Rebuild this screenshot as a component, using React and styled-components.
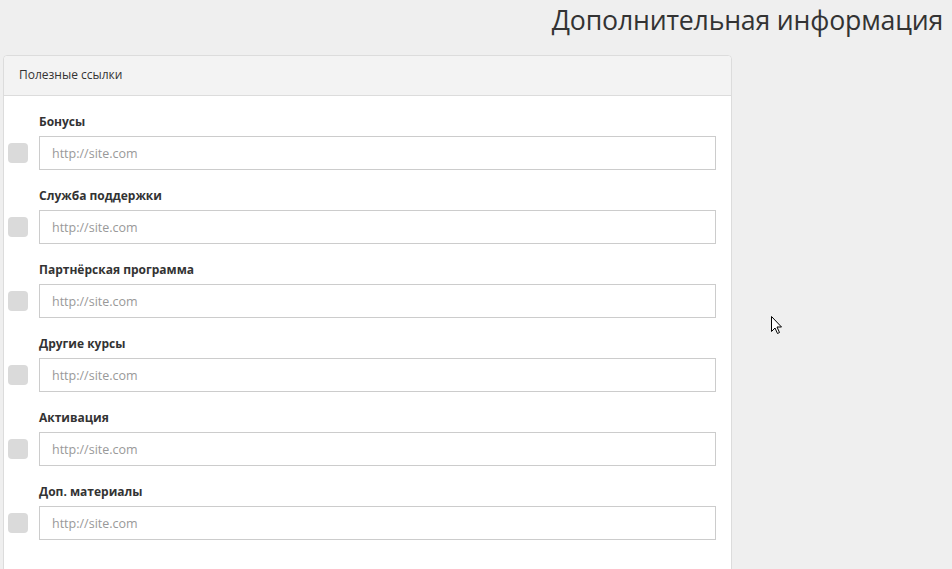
import React from "react";
import styled, { createGlobalStyle } from "styled-components";

const Global = createGlobalStyle`
  html, body { margin: 0; padding: 0; background: #efefef; }
  body { font-family: "Open Sans", "Noto Sans", sans-serif; color: #333; }
  * { box-sizing: border-box; }
`;

const Page = styled.div`
  width: 952px;
  height: 569px;
  overflow: hidden;
  position: relative;
`;

const Title = styled.h1`
  margin: 0;
  height: 55px;
  padding: 0 9px 0 0;
  text-align: right;
  font-weight: 400;
  font-size: 26.7px;
  line-height: 39px;
  color: #333;
  letter-spacing: -0.2px;
`;

const Panel = styled.section`
  margin-left: 3px;
  width: 729px;
  background: #fff;
  border: 1px solid #dcdcdc;
  border-radius: 4px 4px 0 0;
`;

const PanelHeader = styled.div`
  height: 40px;
  background: #f3f3f3;
  border-bottom: 1px solid #dcdcdc;
  border-radius: 4px 4px 0 0;
  padding: 0 15px 2px;
  display: flex;
  align-items: center;
  font-size: 12px;
  color: #333;
`;

const PanelBody = styled.div`
  padding: 17px 14px 40px 4px;
  display: flex;
  flex-direction: column;
  gap: 17px;
`;

const Row = styled.div`
  display: grid;
  grid-template-columns: 20px 1fr;
  column-gap: 11px;
  row-gap: 5px;
  align-items: center;
`;

const Label = styled.label`
  grid-column: 2;
  font-size: 12px;
  font-weight: 700;
  line-height: 18px;
  color: #333;
`;

const Check = styled.span`
  grid-column: 1;
  width: 20px;
  height: 20px;
  border-radius: 4px;
  background: #dadada;
`;

const Input = styled.input`
  grid-column: 2;
  width: 677px;
  height: 34px;
  border: 1px solid #cccccc;
  padding: 0 12px;
  font-family: inherit;
  font-size: 12.5px;
  color: #555;
  background: #fff;
  outline: none;
  &::placeholder { color: #999; }
`;

const Cursor = styled.svg`
  position: absolute;
  left: 771px;
  top: 316px;
`;

const rows = [
  "Бонусы",
  "Служба поддержки",
  "Партнёрская программа",
  "Другие курсы",
  "Активация",
  "Доп. материалы",
];

export default function App() {
  return (
    <Page>
      <Global />
      <Title>Дополнительная информация</Title>
      <Panel>
        <PanelHeader>Полезные ссылки</PanelHeader>
        <PanelBody>
          {rows.map((r) => (
            <Row key={r}>
              <Label>{r}</Label>
              <Check />
              <Input placeholder="http://site.com" />
            </Row>
          ))}
        </PanelBody>
      </Panel>
      <Cursor width="12" height="20" viewBox="0 0 12 20">
        <path d="M0.5 0.5 L0.5 15.5 L4 12 L6.5 17.5 L8.5 16.5 L6 11 L10.5 11 Z" fill="#fff" stroke="#000" strokeWidth="1" />
      </Cursor>
    </Page>
  );
}
